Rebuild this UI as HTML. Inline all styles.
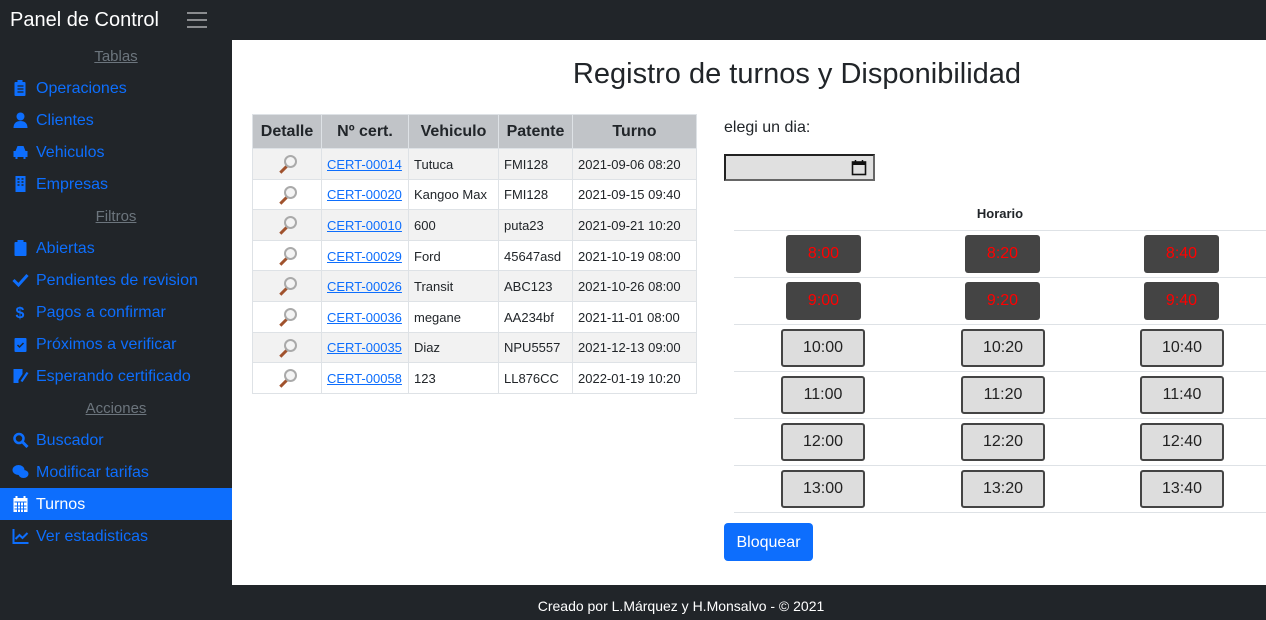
<!DOCTYPE html>
<html><head><meta charset="utf-8">
<style>
*{box-sizing:border-box;margin:0;padding:0}
html,body{width:1266px;height:620px;overflow:hidden}
body{background:#212529;font-family:"Liberation Sans",sans-serif;position:relative}
.top{position:absolute;left:0;top:0;width:1266px;height:40px;background:#212529}
.brand{position:absolute;left:10px;top:9px;color:#fff;font-size:20px}
.burger{position:absolute;left:187px;top:12px;width:20px}
.burger i{display:block;height:2px;background:#8a8c8f;margin-bottom:5px}
.side{position:absolute;left:0;top:40px;width:232px;height:545px;background:#212529}
.hd{position:absolute;left:0;width:232px;text-align:center;color:#6c757d;font-size:15px;text-decoration:underline}
.it{position:absolute;left:0;width:232px;height:32px;color:#0d6efd;font-size:16px;line-height:34px;padding-left:36px}
.it svg{position:absolute;left:12px;top:8px;width:17px;height:16px}
.it.act{background:#0d6efd;color:#fff}
.main{position:absolute;left:232px;top:40px;width:1034px;height:545px;background:#fff}
h1{position:absolute;left:48px;width:1034px;top:18px;text-align:center;font-size:29px;font-weight:normal;color:#212529}
table.t{position:absolute;left:20px;top:74px;border-collapse:collapse;font-size:13px;color:#212529}
.t td,.t th{border:1px solid #dee2e6;height:30.6px;padding:1px 5px 0}
.t th{background:#c1c4c8;font-size:16px;height:34px;text-align:center}
.t tr:nth-child(even) td{background:#f2f2f2}
.t a{color:#0d6efd;text-decoration:underline}
.foot{position:absolute;left:96px;top:585px;width:1170px;height:35px;color:#fff;font-size:14px;text-align:center;line-height:42px}
.lbl{position:absolute;left:492px;top:79px;font-size:16px;color:#212529}
.date{position:absolute;left:492px;top:114px;width:151px;height:27px;background:#e0e0e0;border:2px solid;border-color:#222 #666 #666 #222}
.hor{position:absolute;left:502px;top:166px;width:532px;text-align:center;font-size:13px;font-weight:bold;color:#212529}
.line{position:absolute;left:502px;width:532px;height:1px;background:#dee2e6}
.b{position:absolute;height:38px;font-family:"Liberation Sans",sans-serif;font-size:16px;text-align:center;line-height:38px;border-radius:3px}
.d{width:75px;background:#444;color:#f00}
.l{width:84px;background:#ddd;color:#222;border:2px solid #444;line-height:34px}
.bq{position:absolute;left:492px;top:483px;width:89px;height:38px;background:#0d6efd;color:#fff;border-radius:4px;font-size:16px;text-align:center;line-height:40px}
.t td[align=center]{font-size:0;position:relative}
.t td[align=center]::after{content:"";position:absolute;left:31px;top:6px;width:9px;height:9px;border:2px solid #aaa;border-radius:50%;background:#f4f4f4}
.t td[align=center]::before{content:"";position:absolute;left:26px;top:19px;width:9px;height:3px;background:#a0522d;transform:rotate(-45deg)}
</style></head><body>
<div class="top"><div class="brand">Panel de Control</div><div class="burger"><i></i><i></i><i></i></div></div>
<div class="side">
<div class="hd" style="top:8px">Tablas</div>
<div class="it" style="top:32px"><svg viewBox="0 0 16 16"><rect x="2" y="2" width="11" height="14" rx="1" fill="#0d6efd"/><rect x="5" y="0" width="5" height="3" fill="#0d6efd"/><path d="M5 6h6M5 9h6M5 12h6" stroke="#212529" stroke-width="1.2"/></svg>Operaciones</div>
<div class="it" style="top:64px"><svg viewBox="0 0 16 16"><circle cx="8" cy="4.5" r="4" fill="#0d6efd"/><path d="M1 16c0-5 3-7 7-7s7 2 7 7z" fill="#0d6efd"/></svg>Clientes</div>
<div class="it" style="top:96px"><svg viewBox="0 0 16 16"><path d="M3 7l2-5h6l2 5h2v6h-2v2h-2v-2H5v2H3v-2H1V7z" fill="#0d6efd"/></svg>Vehiculos</div>
<div class="it" style="top:128px"><svg viewBox="0 0 16 16"><rect x="3" y="0" width="10" height="16" fill="#0d6efd"/><path d="M5 3h2M9 3h2M5 6h2M9 6h2M5 9h2M9 9h2" stroke="#212529" stroke-width="1.5"/></svg>Empresas</div>
<div class="hd" style="top:168px">Filtros</div>
<div class="it" style="top:192px"><svg viewBox="0 0 16 16"><rect x="2" y="2" width="12" height="14" rx="1" fill="#0d6efd"/><rect x="5" y="0" width="6" height="3" fill="#0d6efd"/></svg>Abiertas</div>
<div class="it" style="top:224px"><svg viewBox="0 0 16 16"><path d="M1 8l5 5L15 3" stroke="#0d6efd" stroke-width="3" fill="none"/></svg>Pendientes de revision</div>
<div class="it" style="top:256px"><svg viewBox="0 0 16 16"><text x="3" y="14" font-size="16" font-weight="bold" fill="#0d6efd" font-family="Liberation Sans">$</text></svg>Pagos a confirmar</div>
<div class="it" style="top:288px"><svg viewBox="0 0 16 16"><rect x="2" y="2" width="12" height="14" rx="1" fill="#0d6efd"/><path d="M5 9l2 2 4-4" stroke="#212529" stroke-width="1.5" fill="none"/></svg>Próximos a verificar</div>
<div class="it" style="top:320px"><svg viewBox="0 0 16 16"><path d="M1 1h9v5l-4 6v3H1z" fill="#0d6efd"/><path d="M8 13l6-9 2 1-6 9z" fill="#0d6efd"/></svg>Esperando certificado</div>
<div class="hd" style="top:360px">Acciones</div>
<div class="it" style="top:384px"><svg viewBox="0 0 16 16"><circle cx="6.5" cy="6.5" r="4.5" stroke="#0d6efd" stroke-width="2.5" fill="none"/><path d="M10 10l5 5" stroke="#0d6efd" stroke-width="3"/></svg>Buscador</div>
<div class="it" style="top:416px"><svg viewBox="0 0 16 16"><ellipse cx="6" cy="6" rx="6" ry="5" fill="#0d6efd"/><ellipse cx="11" cy="10" rx="5" ry="4" fill="#0d6efd"/></svg>Modificar tarifas</div>
<div class="it act" style="top:448px"><svg viewBox="0 0 16 16"><rect x="1" y="2" width="14" height="14" fill="#fff"/><path d="M4 0v4M12 0v4" stroke="#fff" stroke-width="2"/><path d="M2 6h12M5 6v10M8 6v10M11 6v10M2 10h12M2 13h12" stroke="#0d6efd" stroke-width="1"/></svg>Turnos</div>
<div class="it" style="top:480px"><svg viewBox="0 0 16 16"><path d="M1 1v14h15" stroke="#0d6efd" stroke-width="2" fill="none"/><path d="M3 11l4-4 3 3 5-5" stroke="#0d6efd" stroke-width="2" fill="none"/></svg>Ver estadisticas</div>
</div>
<div class="main">
<h1>Registro de turnos y Disponibilidad</h1>
<table class="t">
<tr><th style="width:69px">Detalle</th><th style="width:87px">Nº cert.</th><th style="width:90px">Vehiculo</th><th style="width:74px">Patente</th><th style="width:124px">Turno</th></tr>
<tr><td align="center">M</td><td><a>CERT-00014</a></td><td>Tutuca</td><td>FMI128</td><td>2021-09-06 08:20</td></tr>
<tr><td align="center">M</td><td><a>CERT-00020</a></td><td>Kangoo Max</td><td>FMI128</td><td>2021-09-15 09:40</td></tr>
<tr><td align="center">M</td><td><a>CERT-00010</a></td><td>600</td><td>puta23</td><td>2021-09-21 10:20</td></tr>
<tr><td align="center">M</td><td><a>CERT-00029</a></td><td>Ford</td><td>45647asd</td><td>2021-10-19 08:00</td></tr>
<tr><td align="center">M</td><td><a>CERT-00026</a></td><td>Transit</td><td>ABC123</td><td>2021-10-26 08:00</td></tr>
<tr><td align="center">M</td><td><a>CERT-00036</a></td><td>megane</td><td>AA234bf</td><td>2021-11-01 08:00</td></tr>
<tr><td align="center">M</td><td><a>CERT-00035</a></td><td>Diaz</td><td>NPU5557</td><td>2021-12-13 09:00</td></tr>
<tr><td align="center">M</td><td><a>CERT-00058</a></td><td>123</td><td>LL876CC</td><td>2022-01-19 10:20</td></tr>
</table>
<div class="lbl">elegi un dia:</div>
<div class="date"><svg style="position:absolute;right:6px;top:3px" width="16" height="17" viewBox="0 0 16 17"><rect x="1.5" y="3" width="13" height="12.5" fill="none" stroke="#111" stroke-width="1.6"/><rect x="1.5" y="3" width="13" height="3" fill="#111"/><path d="M4.5 1v3M11.5 1v3" stroke="#111" stroke-width="1.5"/></svg></div>
<div class="hor">Horario</div>
<div class="line" style="top:190px"></div>
<div class="line" style="top:237px"></div>
<div class="line" style="top:284px"></div>
<div class="line" style="top:331px"></div>
<div class="line" style="top:378px"></div>
<div class="line" style="top:425px"></div>
<div class="line" style="top:472px"></div>
<div class="b d" style="left:554px;top:195px">8:00</div><div class="b d" style="left:733px;top:195px">8:20</div><div class="b d" style="left:912px;top:195px">8:40</div>
<div class="b d" style="left:554px;top:242px">9:00</div><div class="b d" style="left:733px;top:242px">9:20</div><div class="b d" style="left:912px;top:242px">9:40</div>
<div class="b l" style="left:549px;top:289px">10:00</div><div class="b l" style="left:729px;top:289px">10:20</div><div class="b l" style="left:908px;top:289px">10:40</div>
<div class="b l" style="left:549px;top:336px">11:00</div><div class="b l" style="left:729px;top:336px">11:20</div><div class="b l" style="left:908px;top:336px">11:40</div>
<div class="b l" style="left:549px;top:383px">12:00</div><div class="b l" style="left:729px;top:383px">12:20</div><div class="b l" style="left:908px;top:383px">12:40</div>
<div class="b l" style="left:549px;top:430px">13:00</div><div class="b l" style="left:729px;top:430px">13:20</div><div class="b l" style="left:908px;top:430px">13:40</div>
<div class="bq">Bloquear</div>
</div>
<div class="foot">Creado por L.Márquez y H.Monsalvo - © 2021</div>
</body></html>
